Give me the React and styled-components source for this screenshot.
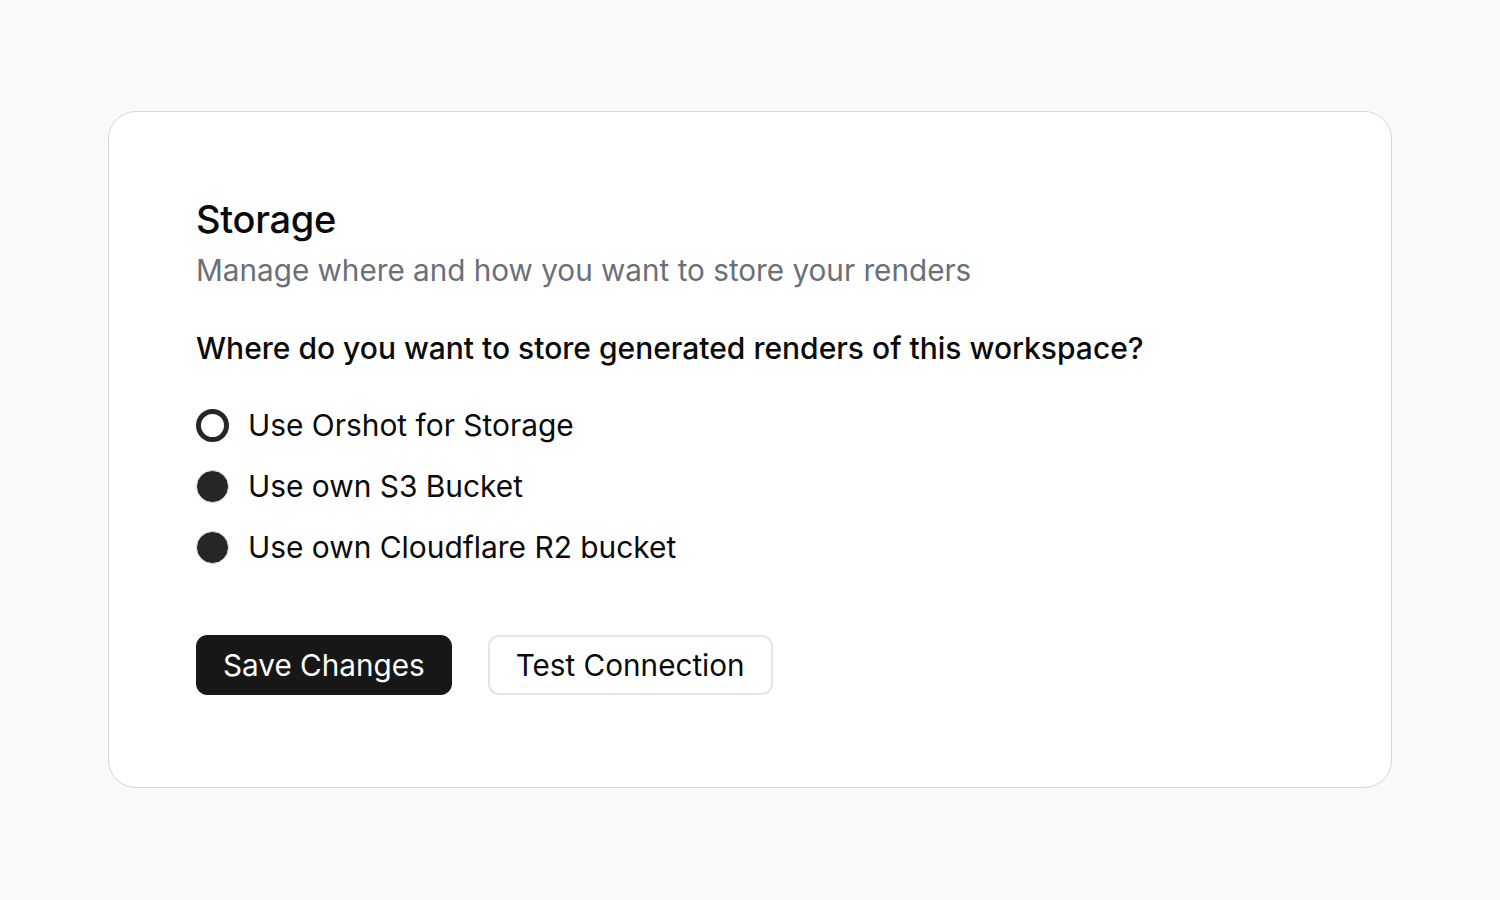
import React from 'react';
import styled, { createGlobalStyle } from 'styled-components';

const GlobalStyle = createGlobalStyle`
  html, body {
    margin: 0;
    padding: 0;
    background: #f9f9f9;
    font-family: Inter, "Liberation Sans", sans-serif;
  }
`;

const options = [
  { id: 'orshot', label: 'Use Orshot for Storage' },
  { id: 's3', label: 'Use own S3 Bucket' },
  { id: 'r2', label: 'Use own Cloudflare R2 bucket' },
];

const App = () => {
  const [selected, setSelected] = React.useState('orshot');

  return (
    <>
      <GlobalStyle />
      <Page>
        <Card>
          <Title>Storage</Title>
          <Subtitle>Manage where and how you want to store your renders</Subtitle>
          <Question>Where do you want to store generated renders of this workspace?</Question>
          <RadioList>
            {options.map((opt) => (
              <RadioRow key={opt.id} onClick={() => setSelected(opt.id)}>
                <Radio $checked={selected === opt.id} />
                <span>{opt.label}</span>
              </RadioRow>
            ))}
          </RadioList>
          <Buttons>
            <PrimaryButton>Save Changes</PrimaryButton>
            <OutlineButton>Test Connection</OutlineButton>
          </Buttons>
        </Card>
      </Page>
    </>
  );
};

const Page = styled.div`
  width: 1500px;
  height: 900px;
  box-sizing: border-box;
  padding: 111px 108px 0;
`;

const Card = styled.div`
  box-sizing: border-box;
  height: 677px;
  background: #ffffff;
  border: 1.5px solid #d6d6d6;
  border-radius: 28px;
  padding: 84px 87px 0;
  display: flex;
  flex-direction: column;
`;

const Title = styled.h2`
  margin: 0;
  font-size: 38px;
  font-weight: 500;
  line-height: 46px;
  color: #0a0a0a;
  letter-spacing: -0.3px;
`;

const Subtitle = styled.p`
  margin: 9px 0 0;
  font-size: 29.7px;
  line-height: 38px;
  color: #6b6f78;
`;

const Question = styled.p`
  margin: 40px 0 0;
  font-size: 30px;
  font-weight: 500;
  line-height: 38px;
  color: #0a0a0a;
`;

const RadioList = styled.div`
  margin-top: 39px;
  display: flex;
  flex-direction: column;
  gap: 23px;
`;

const RadioRow = styled.label`
  display: flex;
  align-items: center;
  gap: 19px;
  font-size: 29.9px;
  line-height: 38px;
  color: #0a0a0a;
  cursor: pointer;
`;

const Radio = styled.span`
  box-sizing: border-box;
  width: 33px;
  height: 33px;
  border-radius: 50%;
  flex-shrink: 0;
  background: ${(p) => (p.$checked ? '#ffffff' : '#262626')};
  border: ${(p) => (p.$checked ? '5.5px solid #262626' : '1px solid #e4e4e4')};
`;

const Buttons = styled.div`
  margin-top: 69px;
  display: flex;
  gap: 36px;
`;

const BaseButton = styled.button`
  box-sizing: border-box;
  height: 60px;
  padding: 0 26px;
  border-radius: 11px;
  font-family: Inter, "Liberation Sans", sans-serif;
  font-size: 29.7px;
  cursor: pointer;
`;

const PrimaryButton = styled(BaseButton)`
  background: #171717;
  color: #ffffff;
  border: 1px solid #171717;
`;

const OutlineButton = styled(BaseButton)`
  background: #ffffff;
  color: #0a0a0a;
  border: 2px solid #e5e5e5;
`;

export default App;
